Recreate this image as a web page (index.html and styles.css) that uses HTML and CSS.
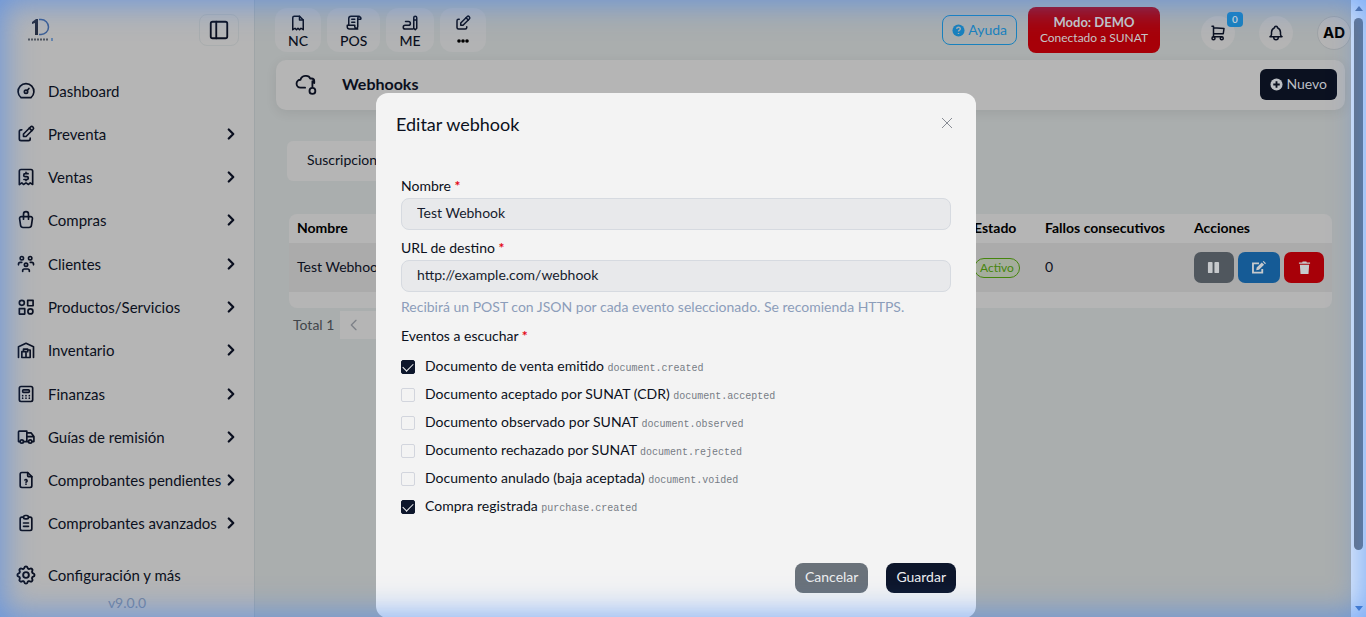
FILE: index.html
```html
<!DOCTYPE html>
<html lang="es">
<head>
<meta charset="utf-8">
<title>Webhooks</title>
<link rel="stylesheet" href="styles.css">
</head>
<body>
<svg class="sprite" aria-hidden="true">
  <symbol id="i-chevron" viewBox="0 0 24 24"><path d="M9 6l6 6-6 6"/></symbol>
  <symbol id="i-edit" viewBox="0 0 24 24"><path d="M7 7H6a2 2 0 0 0-2 2v9a2 2 0 0 0 2 2h9a2 2 0 0 0 2-2v-1"/><path d="M20.400 6.600a2.100 2.100 0 0 0-3-3L9 12v3h3l8.400-8.400z"/><path d="M16 5l3 3"/></symbol>
</svg>
<div class="app">
  <aside class="sidebar">
    <header class="brand">
      <svg class="logo" viewBox="0 0 26 24" role="img" aria-label="Empresa 1">
        <path d="M4 4l4-3h2v16H7V5L4 6z" fill="#252c3d"/>
        <path d="M11 1.500h2a7.500 7.500 0 0 1 0 15h-2" fill="none" stroke="#3c5e93" stroke-width="1.500"/>
        <path d="M0 21.500h21" stroke="#51565f" stroke-width="2" stroke-dasharray="2 1"/><path d="M24 20v3" stroke="#4c77ac" stroke-width="1.500"/>
      </svg>
      <button class="collapse" type="button" aria-label="Contraer menú"><svg class="ico ico-lg" viewBox="0 0 24 24"><rect x="3" y="3" width="18" height="18" rx="2"/><path d="M9 3v18"/></svg></button>
    </header>
    <nav class="menu">
      <a href="#"><svg class="ico" viewBox="0 0 24 24"><path d="M6 20a9.500 9.500 0 1 1 12 0z"/><circle cx="12" cy="13" r="2"/><path d="M13.500 11.500L15.500 9"/></svg><span>Dashboard</span></a>
      <a href="#"><svg class="ico"><use href="#i-edit"/></svg><span>Preventa</span><svg class="ico chev"><use href="#i-chevron"/></svg></a>
      <a href="#"><svg class="ico" viewBox="0 0 24 24"><path d="M4 21V5a2 2 0 0 1 2-2h12a2 2 0 0 1 2 2v16l-3-2-2 2-3-2-3 2-2-2z"/><path d="M14.500 8H11a1.500 1.500 0 0 0 0 3.500h2a1.500 1.500 0 0 1 0 3.500H9.500M12 6.500V8m0 7v1.500"/></svg><span>Ventas</span><svg class="ico chev"><use href="#i-chevron"/></svg></a>
      <a href="#"><svg class="ico" viewBox="0 0 24 24"><path d="M6.300 8h11.400a2 2 0 0 1 2 2.300l-1.200 8.200A3 3 0 0 1 15.500 21h-7a3 3 0 0 1-3-2.500L4.300 10.300A2 2 0 0 1 6.300 8z"/><path d="M9 11V5a3 3 0 0 1 6 0v6"/></svg><span>Compras</span><svg class="ico chev"><use href="#i-chevron"/></svg></a>
      <a href="#"><svg class="ico" viewBox="0 0 24 24"><circle cx="12" cy="13" r="2"/><path d="M8 21v-1a2 2 0 0 1 2-2h4a2 2 0 0 1 2 2v1"/><circle cx="17" cy="5" r="2"/><path d="M17 10h2a2 2 0 0 1 2 2v1"/><circle cx="7" cy="5" r="2"/><path d="M3 13v-1a2 2 0 0 1 2-2h2"/></svg><span>Clientes</span><svg class="ico chev"><use href="#i-chevron"/></svg></a>
      <a href="#"><svg class="ico" viewBox="0 0 24 24"><circle cx="7" cy="7" r="3"/><rect x="14" y="4" width="6.500" height="6.500"/><rect x="4" y="14" width="6.500" height="6.500"/><circle cx="17.300" cy="17.300" r="3"/></svg><span>Productos/Servicios</span><svg class="ico chev"><use href="#i-chevron"/></svg></a>
      <a href="#"><svg class="ico" viewBox="0 0 24 24"><path d="M3 21V8l9-4 9 4v13"/><path d="M7 21v-7h5v7zM12 21h5v-9h-3v2M9 14v-3h5v3"/></svg><span>Inventario</span><svg class="ico chev"><use href="#i-chevron"/></svg></a>
      <a href="#"><svg class="ico" viewBox="0 0 24 24"><rect x="4" y="3" width="16" height="18" rx="2"/><rect x="8" y="7" width="8" height="3" rx="1"/><path d="M8 14v.01M12 14v.01M16 14v.01M8 17v.01M12 17v.01M16 17v.01"/></svg><span>Finanzas</span><svg class="ico chev"><use href="#i-chevron"/></svg></a>
      <a href="#"><svg class="ico" viewBox="0 0 24 24"><circle cx="7" cy="17.500" r="2"/><circle cx="17" cy="17.500" r="2"/><path d="M5 17.500H3V6a1 1 0 0 1 1-1h9v12.500m-4 0h6m4 0h2.500v-6h-8.500M13 7h5l3.500 4.500"/></svg><span>Guías de remisión</span><svg class="ico chev"><use href="#i-chevron"/></svg></a>
      <a href="#"><svg class="ico" viewBox="0 0 24 24"><path d="M14 3v4a1 1 0 0 0 1 1h4"/><path d="M17 21H7a2 2 0 0 1-2-2V5a2 2 0 0 1 2-2h7l5 5v11a2 2 0 0 1-2 2z"/><path d="M12 17v.01M12 14.500a1.500 1.500 0 1 0-1.300-2.500"/></svg><span>Comprobantes pendientes</span><svg class="ico chev"><use href="#i-chevron"/></svg></a>
      <a href="#"><svg class="ico" viewBox="0 0 24 24"><path d="M9 5H7a2 2 0 0 0-2 2v12a2 2 0 0 0 2 2h10a2 2 0 0 0 2-2V7a2 2 0 0 0-2-2h-2"/><rect x="9" y="3" width="6" height="4" rx="2"/><path d="M9 12h6M9 16h6"/></svg><span>Comprobantes avanzados</span><svg class="ico chev"><use href="#i-chevron"/></svg></a>
    </nav>
    <footer class="side-foot">
      <a href="#"><svg class="ico" viewBox="1.500 1.500 21 21"><path d="M10.300 4.300c.4-1.750 2.900-1.750 3.300 0a1.700 1.700 0 0 0 2.600 1.100c1.500-.9 3.300.8 2.400 2.400a1.700 1.700 0 0 0 1 2.500c1.800.5 1.800 3 0 3.400a1.700 1.700 0 0 0-1 2.600c.9 1.500-.8 3.300-2.400 2.400a1.700 1.700 0 0 0-2.600 1c-.4 1.800-2.900 1.800-3.300 0a1.700 1.700 0 0 0-2.600-1c-1.500.9-3.300-.8-2.400-2.400a1.700 1.700 0 0 0-1-2.600c-1.800-.4-1.800-2.900 0-3.400a1.700 1.700 0 0 0 1-2.500c-.9-1.600.8-3.300 2.400-2.400a1.700 1.700 0 0 0 2.600-1.100z"/><circle cx="12" cy="12" r="3"/></svg><span>Configuración y más</span></a>
      <small>v9.0.0</small>
    </footer>
  </aside>

  <main class="main">
    <header class="topbar">
      <nav class="shortcuts">
        <a href="#"><svg class="ico" viewBox="0 0 24 24"><path d="M14 3v5h5"/><path d="M5 21V5a2 2 0 0 1 2-2h7l5 5v13l-3-2-2 2-2-2-2 2-2-2z"/></svg>NC</a>
        <a href="#"><svg class="ico" viewBox="0 0 24 24"><path d="M17 20H6a3 3 0 0 1-3-3v-2h10v2a2 2 0 0 0 4 0V5a2 2 0 1 1 4 2h-4M19 3H8a3 3 0 0 0-3 3v9M9 7h4M9 11h4"/></svg>POS</a>
        <a href="#"><svg class="ico" viewBox="0 0 24 24"><path d="M17 19V5a2 2 0 0 1 4 0v14l-2 2zM17 8h4M16 20H5.500a2.500 2.500 0 0 1 0-5H10a2.500 2.500 0 0 0 0-5H6"/></svg>ME</a>
        <a href="#"><svg class="ico"><use href="#i-edit"/></svg><svg class="dots" viewBox="0 0 12 14" role="img" aria-label="Más"><circle cx="2" cy="7" r="1.800"/><circle cx="6" cy="7" r="1.800"/><circle cx="10" cy="7" r="1.800"/></svg></a>
      </nav>
      <div class="tools">
        <button class="help" type="button"><svg class="glyph" viewBox="0 0 14 14"><circle cx="7" cy="7" r="6.500" fill="currentColor"/><path d="M5 5.300q.2-1.800 2-1.800t2 1.700q0 1-1.300 1.700-.7.400-.7 1.100M7 9.700v1.100" fill="none" stroke="#aaaeae" stroke-width="1.500"/></svg>Ayuda</button>
        <div class="mode"><strong>Modo: DEMO</strong><span>Conectado a SUNAT</span></div>
        <button class="round cart" type="button" aria-label="Carrito"><svg class="ico" viewBox="0 0 24 24"><circle cx="6" cy="19" r="2"/><circle cx="17" cy="19" r="2"/><path d="M17 17H6V3H4M6 5l14 1-1 7H6"/></svg><span class="count">0</span></button>
        <button class="round" type="button" aria-label="Notificaciones"><svg class="ico" viewBox="0 0 24 24"><path d="M10 5a2 2 0 0 1 4 0 7 7 0 0 1 4 6v3a4 4 0 0 0 2 3H4a4 4 0 0 0 2-3v-3a7 7 0 0 1 4-6M9 17v1a3 3 0 0 0 6 0v-1"/></svg></button>
        <button class="round avatar" type="button">AD</button>
      </div>
    </header>

    <section class="page-head">
      <svg class="ico cloud" viewBox="0 0 24 24"><path d="M11 16H6a4.300 4.300 0 0 1 0-8.600C7 2.500 15 1.500 16.500 6H18a3 3 0 0 1 3 3v2M19 9v6"/><circle cx="19" cy="19.500" r="3.200"/></svg>
      <h1>Webhooks</h1>
      <button class="new" type="button"><svg class="glyph" viewBox="0 0 14 14"><circle cx="7" cy="7" r="6.500" fill="currentColor"/><path d="M7 3.500v7M3.500 7h7" stroke="#0b1120" stroke-width="2"/></svg>Nuevo</button>
    </section>

    <section class="content">
      <div class="tabs"><a href="#">Suscripciones</a></div>
      <div class="table-card">
        <table>
          <thead><tr><th>Nombre</th><th class="c-state">Estado</th><th class="c-fails">Fallos consecutivos</th><th class="c-actions">Acciones</th></tr></thead>
          <tbody><tr><td>Test Webhook</td><td><span class="tag">Activo</span></td><td>0</td><td>
            <div class="actions">
              <button class="pause" type="button" aria-label="Pausar"><svg class="glyph" viewBox="0 0 14 14" fill="currentColor"><rect x="1" y="1" width="5" height="12" rx="1"/><rect x="8" y="1" width="5" height="12" rx="1"/></svg></button>
              <button class="edit" type="button" aria-label="Editar"><svg class="glyph wide" viewBox="0 0 16 14"><path d="M8 2.500H1.500v10h10V8.500" fill="none" stroke="currentColor" stroke-width="2"/><path d="M5 10l.5-3L11 1.500 13.500 4 8 9.500zM12 .6l1-.6L15.500 2.500l-1 1z" fill="currentColor"/></svg></button>
              <button class="trash" type="button" aria-label="Eliminar"><svg class="glyph" viewBox="0 0 14 14" fill="currentColor"><path d="M1 1.500h3.500L5 .5h4l.5 1H13V3H1zM2 4h10l-.7 10H2.700z"/></svg></button>
            </div></td></tr></tbody>
        </table>
      </div>
      <div class="pager"><span>Total 1</span><button type="button" aria-label="Anterior"><svg class="ico" viewBox="0 0 24 24"><path d="M15 5l-7 7 7 7"/></svg></button></div>
    </section>
  </main>
  <div class="scroll" aria-hidden="true"><i class="up"></i><b></b><i class="down"></i></div>
</div>

<form class="dialog" role="dialog" aria-labelledby="dlg-title">
  <header><h2 id="dlg-title">Editar webhook</h2><button class="close" type="button" aria-label="Cerrar"><svg viewBox="0 0 12 12"><path d="M1 1l10 10M11 1L1 11"/></svg></button></header>
  <div class="fields">
    <label class="field" for="name">Nombre <em>*</em></label>
    <input class="text" id="name" type="text" value="Test Webhook">
    <label class="field" for="url">URL de destino <em>*</em></label>
    <input class="text" id="url" type="text" value="http://example.com/webhook">
    <p class="hint">Recibirá un POST con JSON por cada evento seleccionado. Se recomienda HTTPS.</p>
    <fieldset>
      <legend class="field">Eventos a escuchar <em>*</em></legend>
      <label class="check"><input type="checkbox" checked><span>Documento de venta emitido <code>document.created</code></span></label>
      <label class="check"><input type="checkbox"><span>Documento aceptado por SUNAT (CDR) <code>document.accepted</code></span></label>
      <label class="check"><input type="checkbox"><span>Documento observado por SUNAT <code>document.observed</code></span></label>
      <label class="check"><input type="checkbox"><span>Documento rechazado por SUNAT <code>document.rejected</code></span></label>
      <label class="check"><input type="checkbox"><span>Documento anulado (baja aceptada) <code>document.voided</code></span></label>
      <label class="check"><input type="checkbox" checked><span>Compra registrada <code>purchase.created</code></span></label>
    </fieldset>
  </div>
  <footer><button class="cancel" type="button">Cancelar</button><button class="save" type="submit">Guardar</button></footer>
</form>
<div class="glow"></div>
</body>
</html>
```
FILE: styles.css
```css
* { box-sizing: border-box; }
body { margin: 0; font: 14px/20px Lato, "Open Sans", sans-serif; color: #0b1020; background: #aaaeae; overflow: hidden; }
button { font: inherit; border: 0; padding: 0; cursor: pointer; display: inline-flex; align-items: center; justify-content: center; }
a { color: inherit; text-decoration: none; }
h1, h2, p { margin: 0; }
.sprite { display: none; }
.ico { width: 20px; height: 20px; flex: none; fill: none; stroke: currentColor; stroke-width: 2; stroke-linecap: round; stroke-linejoin: round; }
.glyph { width: 13px; height: 13px; flex: none; }
.glyph.wide { width: 16px; }
.app { display: flex; height: 100vh; }

.sidebar { width: 255px; flex: none; display: flex; flex-direction: column; background: #b5b5b5; border-right: 1px solid #9fa5a7; }
.brand { height: 69px; flex: none; display: flex; justify-content: space-between; padding: 14px 15px 0 28px; }
.logo { width: 26px; height: 24px; margin-top: 4px; }
.collapse { width: 40px; height: 32px; border: 1px solid #a9adae; border-radius: 8px; background: transparent; color: #0b1020; }
.ico-lg { width: 22px; height: 22px; }
.menu { flex: 1; display: grid; grid-template-columns: minmax(0, 1fr); grid-auto-rows: 1fr; }
.menu a, .side-foot a { display: flex; align-items: center; gap: 12px; padding: 0 14px 0 16px; font-size: 15px; }
.menu span { flex: 1; min-width: 0; white-space: nowrap; }
.menu .chev { width: 18px; margin-left: -12px; stroke-width: 3; }
.side-foot { height: 72px; flex: none; display: flex; flex-direction: column; padding-top: 20px; gap: 8px; }
.side-foot small { font-size: 14px; color: #76849a; text-align: center; }

.main { flex: 1; min-width: 0; display: flex; flex-direction: column; }
.topbar { height: 60px; flex: none; display: flex; justify-content: space-between; align-items: center; padding-left: 20px; }
.shortcuts { display: flex; gap: 6px; }
.shortcuts a { height: 44px; min-width: 46px; padding: 3px 13px 0; display: flex; flex-direction: column; align-items: center; justify-content: center; font-weight: 500; line-height: 18px; background: #b2b3b4; border-radius: 12px; }
.shortcuts .ico { width: 18px; height: 18px; }
.dots { width: 12px; height: 18px; }
.tools { display: flex; align-items: center; }
.help { height: 30px; padding: 0 9px; gap: 3px; background: transparent; border: 1px solid #1981bd; border-radius: 8px; color: #1981bd; }
.mode { width: 132px; height: 46px; margin: 0 41px 0 11px; display: flex; flex-direction: column; align-items: center; justify-content: center; background: #a70008; color: #c6c6c6; border-radius: 8px; font-size: 12px; line-height: 15px; }
.mode strong { font-size: 13px; }
.round { width: 34px; height: 34px; border-radius: 50%; background: #b4b4b4; color: #0b1020; margin: 5px 24px 0 0; position: relative; }
.round .ico { width: 18px; height: 18px; }
.count { position: absolute; left: 26px; top: -4px; width: 16px; height: 15px; background: #1b80bd; color: #c8d0d4; border-radius: 4px; font-size: 10px; font-weight: 700; line-height: 15px; }
.avatar { margin-right: 0; border: 1px solid #9fa3a5; font: 700 15px/20px Inter, sans-serif; color: #000; }

.page-head { height: 50px; flex: none; margin: 0 6px 0 21px; padding: 0 8px 2px 19px; display: flex; align-items: center; background: #b5b5b5; border-radius: 10px; box-shadow: 0 3px 12px rgba(0, 0, 0, .08); }
.cloud { width: 22px; height: 22px; }
.page-head h1 { flex: 1; margin-left: 25px; font-size: 16px; line-height: 24px; font-weight: 700; }
.new { height: 31px; padding: 0 10px; gap: 3px; background: #0b1120; color: #bcbfc4; border-radius: 6px; }
.content { padding: 31px 19px 0 34px; }
.tabs { width: 160px; margin-left: -2px; height: 40px; padding: 9px 20px; background: #b5b5b5; border-radius: 6px; }
.table-card { margin-top: 33px; padding-bottom: 16px; background: #b5b5b5; border-radius: 8px; }
table { width: 100%; border-collapse: collapse; table-layout: fixed; }
th { height: 29px; padding: 0 8px 2px; text-align: left; font-weight: 700; color: #000; white-space: nowrap; }
td { height: 49px; padding: 0 8px 1px; background: #ababab; }
.c-state { width: 71px; }
.c-fails { width: 149px; }
.c-actions { width: 146px; }
.tag { display: inline-block; padding: 0 5px; border: 1px solid #45850d; border-radius: 10px; background: #a5ad9d; color: #45850d; font-size: 12px; line-height: 18px; }
.actions { display: flex; gap: 4px; }
.actions button { width: 40px; height: 31px; border-radius: 7px; color: #c6c9cc; }
.pause { background: #50575e; }
.actions .edit { width: 43px; background: #155b96; }
.trash { background: #a70008; }
.pager { display: flex; align-items: center; gap: 6px; margin: 3px 0 0 4px; color: #42464b; }
.pager button { width: 60px; height: 28px; padding-left: 6px; justify-content: flex-start; background: #b5b5b5; color: #7d8188; }
.pager .ico { width: 16px; height: 16px; }

.scroll { width: 15px; flex: none; display: flex; flex-direction: column; align-items: center; gap: 7px; padding: 6px 0; background: #dce8f8; }
.scroll b { width: 9px; flex: none; height: 532px; background: #6b7480; border-radius: 5px; }
.scroll i { border: 4px solid transparent; flex: none; }
.scroll .up { border-top: 0; border-bottom: 5px solid #596e90; }
.scroll .down { border-bottom: 0; border-top: 5px solid #4576bd; margin-top: auto; }

.dialog { position: absolute; top: 15vh; left: calc(50% - 7px); transform: translateX(-50%); width: 600px; background: #f3f3f3; border-radius: 12px; }
.dialog header { display: flex; align-items: center; justify-content: space-between; padding: 19px 22px 0 20px; }
.dialog h2 { font-size: 18px; line-height: 24px; font-weight: 400; }
.close { width: 14px; height: 20px; margin-bottom: 2px; background: transparent; color: #888c94; }
.close svg { width: 12px; height: 12px; fill: none; stroke: currentColor; stroke-width: 1; }
.fields { padding: 38px 25px 0; }
.field { display: block; padding: 0; line-height: 24px; }
.field em { color: #e30613; font-style: normal; font-weight: 700; }
.text { display: block; width: 100%; height: 32px; margin-bottom: 6px; padding: 0 15px 2px; font: inherit; color: #161c2d; background: #e8e9eb; border: 1px solid #d6dae0; border-radius: 8px; }
.hint { line-height: 18px; color: #8c9dba; }
fieldset { border: 0; margin: 8px 0 0; padding: 0; min-width: 0; }
legend { margin-bottom: 5px; }
.check { display: flex; align-items: center; gap: 10px; height: 28px; }
.check span { padding-bottom: 1px; }
.check input { appearance: none; width: 14px; height: 14px; margin: 0; border: 1px solid #d2d5dd; border-radius: 2px; display: grid; place-items: center; }
.check input:checked { background: #0d162b; border-color: #0d162b; }
.check input:checked::after { content: ""; width: 9px; height: 5px; border: solid #f3f3f3; border-width: 0 0 1px 1px; transform: translateY(-1px) rotate(-45deg); }
code { font: 10px/16px "Liberation Mono", monospace; color: #767c85; }
.dialog footer { display: flex; justify-content: flex-end; gap: 18px; padding: 42px 20px 25px; }
.dialog footer button { height: 30px; padding: 0 10px 2px; border-radius: 8px; color: #eceef0; }
.dialog .cancel { background: #6a727a; }
.dialog .save { background: #0d162b; }
.glow { position: fixed; inset: 0; pointer-events: none; box-shadow: inset 0 0 32px 2px rgba(59, 130, 246, .65); }
```
